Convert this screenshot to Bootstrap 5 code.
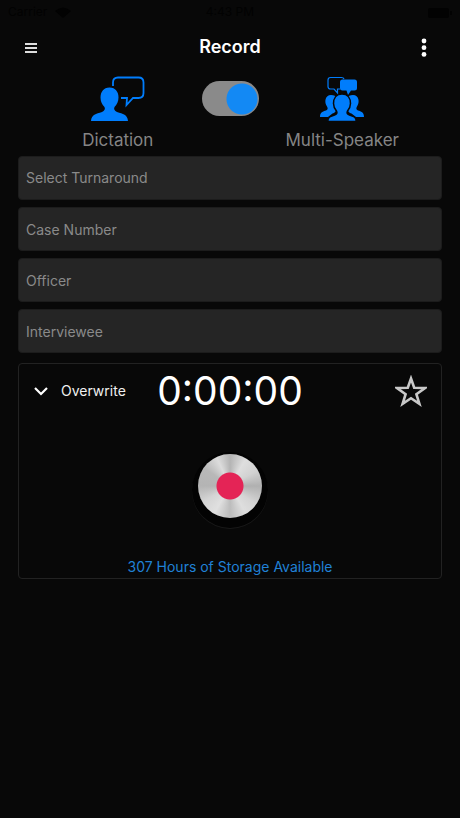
<!DOCTYPE html>
<html lang="en">
<head>
<meta charset="utf-8">
<meta name="viewport" content="width=device-width, initial-scale=1">
<title>Record</title>
<link href="https://cdn.jsdelivr.net/npm/bootstrap@5.3.0/dist/css/bootstrap.min.css" rel="stylesheet">
<style>
body { background: #080808; color: #fff; font-family: Inter, "Liberation Sans", sans-serif; font-size: 14px; line-height: 20px; }
.status-bar { height: 24px; padding: 0 8px; color: #020202; font-size: 12px; }
.status-bar > * { flex: 1 1 0; }
.top-bar { height: 46px; padding: 0 18px; }
.top-bar h1 { font-size: 18px; line-height: 24px; font-weight: 600; }
.icon-btn { width: 36px; height: 32px; padding: 0; border: 0; background: none; color: #fff; }
.menu-btn { padding: 0 7px; text-align: left; }
.mode-row { padding: 6px 34px 0; height: 86px; }
.mode { flex: 1 1 0; gap: 6px; color: #858585; font-size: 17px; line-height: 24px; }
.mode svg { color: #007dfc; }
.mode-switch.form-check-input { width: 57px; height: 35px; margin: 5px 0 0; border: 0; border-radius: 18px; background: radial-gradient(circle at center, #1389f4 15px, transparent 16px) right 1px center / 32px 32px no-repeat, #8a8a8a; box-shadow: none; }
.mode-switch.form-check-input:not(:checked) { background-position: left 1px center; }
.panel { padding: 0 18px; }
.fields { gap: 7px; margin-bottom: 10px; }
.field.form-control { height: 44px; padding: 0 7px; border: 1px solid #1c1c1c; border-radius: 4px; background: #252525; color: #8a8a8a; font-size: 14px; line-height: 20px; }
.field::placeholder { color: #8a8a8a; opacity: 1; }
.recorder { border: 1px solid #222; border-radius: 4px; padding-bottom: 1px; }
.recorder-head { height: 54px; padding: 0 14px; }
.recorder-head > div { flex: 1 1 0; }
.overwrite-btn { gap: 12px; padding: 0; border: 0; background: none; color: #f0f0f0; }
.timer { font-size: 39px; line-height: 54px; }
.record-zone { padding: 36px 0 39px; }
.record-btn { width: 64px; height: 64px; padding: 0; border: 0; border-radius: 50%; background: radial-gradient(circle, #e42456 13px, transparent 14px), conic-gradient(#b4b4b4, #dedede 30deg, #d2d2d2 60deg, #b0b0b0 90deg, #d4d4d4 125deg, #dedede 150deg, #bcbcbc 180deg, #e0e0e0 210deg, #d4d4d4 240deg, #b4b4b4 270deg, #b8b8b8 305deg, #dcdcdc 335deg, #b4b4b4); box-shadow: 0 4px 0 6px #030303, 0 5px 0 6px #191919; }
.storage { color: #2081d6; font-size: 14px; line-height: 20px; }
</style>
</head>
<body>
<header>
  <div class="status-bar d-flex align-items-center">
    <span class="d-flex align-items-center gap-2">Carrier
      <svg width="16" height="11" viewBox="0 0 16 11" fill="currentColor"><path d="M0 4Q8-3 16 4L8 11z"/></svg>
    </span>
    <span class="text-center">4:43 PM</span>
    <span class="text-end">
      <svg width="24" height="10" viewBox="0 0 24 10" fill="currentColor"><rect width="21" height="10" rx="2"/><rect x="22" y="3" width="2" height="4"/></svg>
    </span>
  </div>
  <nav class="top-bar d-flex align-items-center justify-content-between">
    <button class="icon-btn menu-btn" type="button" aria-label="Menu">
      <svg width="12" height="12" viewBox="0 0 12 12" stroke="#ddd" stroke-width="2"><path d="M0 2h12M0 6h12M0 10h12"/></svg>
    </button>
    <h1 class="m-0">Record</h1>
    <button class="icon-btn" type="button" aria-label="More options">
      <svg width="6" height="20" viewBox="0 0 6 20" fill="currentColor"><circle cx="3" cy="3" r="2.400"/><circle cx="3" cy="9.700" r="2.400"/><circle cx="3" cy="16.400" r="2.400"/></svg>
    </button>
  </nav>
</header>
<main>
  <div class="mode-row d-flex align-items-start">
    <label class="mode d-flex flex-column align-items-center" for="mode">
      <svg width="54" height="46" viewBox="0 0 54 46"><path fill="currentColor" d="M18.500 11.500c6 0 9 4.500 9 10 0 4-1.500 7-4 9.500-1 1.800 0 4 2.500 5 6 2 10.500 2.500 11 9H0c.5-6.500 5-7 11-9 2.500-1 3.500-3.200 2.500-5-2.500-2.500-4-5.500-4-9.500 0-5.500 3-10 9-10z"/><path fill="none" stroke="currentColor" stroke-width="1.800" d="M22 10V6.500Q22 1.500 27 1.500h20.500q5 0 5 5v10.500q0 5-5 5H42l-6.500 7 .5-7h-6"/></svg>
      <span>Dictation</span>
    </label>
    <input class="mode-switch form-check-input" type="checkbox" role="switch" id="mode" aria-label="Multi-Speaker mode" checked>
    <label class="mode d-flex flex-column align-items-center" for="mode">
      <svg width="44" height="46" viewBox="0 0 44 46"><g fill="currentColor"><path d="M11 19c3 0 5 1 6 2.500-3 3-3.500 8-1.500 12 1 2-1 3.500-3 4L8 41H0c0-5 3-5.500 6-6.500 2-.8 2-2.500 1-4-3-4-2-11.500 4-11.500z"/><path d="M33 19c-3 0-5 1-6 2.500 3 3 3.500 8 1.500 12-1 2 1 3.500 3 4L36 41h8c0-5-3-5.500-6-6.500-2-.8-2-2.500-1-4 3-4 2-11.500-4-11.500z"/><path stroke="#080808" stroke-width="1.500" d="M22 18c6 0 8.500 4.500 8.500 9.500 0 3-1.200 5.500-3 7.500-1 2 0 3.500 2 4 4.500 1.500 6.700 2 6.700 6.500H7.800c0-4.500 2.200-5 6.700-6.500 2-.5 3-2 2-4-1.800-2-3-4.500-3-7.500 0-5 2.500-9.500 8.500-9.500z"/><path d="M22.500 3.500h12q2.500 0 2.500 2.500v6q0 2.500-2.500 2.500H31L28 19l-1.500-4.500h-4Q20 14.500 20 12V6q0-2.500 2.500-2.500z"/></g><path fill="none" stroke="currentColor" stroke-width="1.200" d="M24 3.200Q23.600 1.500 21.500 1.500H10.500Q8 1.500 8 4v6.500q0 2.500 2.500 2.500h3.500l3.500 4v-4h2.500"/></svg>
      <span>Multi-Speaker</span>
    </label>
  </div>
  <div class="panel">
    <form class="fields d-grid">
      <select class="field form-control" aria-label="Turnaround"><option>Select Turnaround</option></select>
      <input class="field form-control" type="text" placeholder="Case Number" aria-label="Case Number">
      <input class="field form-control" type="text" placeholder="Officer" aria-label="Officer">
      <input class="field form-control" type="text" placeholder="Interviewee" aria-label="Interviewee">
    </form>
    <section class="recorder">
      <div class="recorder-head d-flex align-items-center">
        <div>
          <button class="overwrite-btn d-flex align-items-center" type="button">
            <svg width="16" height="12" viewBox="0 0 16 12" fill="none" stroke="#fff" stroke-width="2.200"><path d="M2 3l6 6 6-6"/></svg>
            Overwrite
          </button>
        </div>
        <span class="timer">0:00:00</span>
        <div class="text-end">
          <button class="icon-btn text-end" type="button" aria-label="Favorite">
            <svg width="32" height="32" viewBox="0 0 32 32" fill="none" stroke="#c8c8c8" stroke-width="2.600"><path d="M16 3.500l3.200 9.200 10.800.3-8.600 6.200 3 9.600-8.400-5.600-8.400 5.600 3-9.600L2 13l10.800-.3z"/></svg>
          </button>
        </div>
      </div>
      <div class="record-zone d-flex justify-content-center">
        <button class="record-btn" type="button" aria-label="Record"></button>
      </div>
      <div class="storage text-center">307 Hours of Storage Available</div>
    </section>
  </div>
</main>
<script src="https://cdn.jsdelivr.net/npm/bootstrap@5.3.0/dist/js/bootstrap.bundle.min.js"></script>
</body>
</html>
